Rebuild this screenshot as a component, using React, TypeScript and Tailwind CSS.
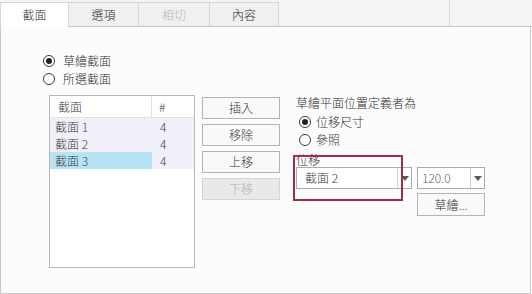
import type { ReactNode } from 'react';

const TABS = [
  { label: '截面', w: 'w-[69px]', active: true },
  { label: '選項', w: 'w-[70px]' },
  { label: '相切', w: 'w-[71px]', disabled: true },
  { label: '內容', w: 'w-[69px]' }
];

const ROWS = [
  { name: '截面 1', n: 4 },
  { name: '截面 2', n: 4 },
  { name: '截面 3', n: 4, selected: true }
];

function Radio({ checked, children, gap = 'gap-[8px]', indent = '' }: { checked?: boolean; children: ReactNode; gap?: string; indent?: string }) {
  return (
    <div className={`flex items-center h-[18px] ${gap} ${indent}`}>
      <span className="w-[12px] h-[12px] rounded-full border border-[#3a3a3a] bg-white flex items-center justify-center">
        {checked && <span className="w-[6px] h-[6px] rounded-full bg-[#222]"></span>}
      </span>
      <span className="leading-[16px]">{children}</span>
    </div>
  );
}

function Arrow() {
  return (
    <svg width="8" height="5" viewBox="0 0 8 5">
      <path d="M0 0 L8 0 L4 5 Z" fill="#5a5a5a" />
    </svg>
  );
}

function Btn({ children, disabled }: { children: ReactNode; disabled?: boolean }) {
  return (
    <div
      className={`h-[22px] w-[78px] border flex items-center justify-center leading-[16px] ${
        disabled ? 'border-[#d5d5d5] bg-[#e9e9e9] text-[#b0b0b0]' : 'border-[#b4b4b4] bg-[#f9f9f9] text-[#333]'
      }`}
    >
      {children}
    </div>
  );
}

export default function App() {
  return (
    <div
      className="w-[532px] h-[294px] bg-white overflow-hidden text-[12px] font-light text-[#2e2e2e] flex flex-col"
      style={{ fontFamily: '"Noto Sans CJK TC", "Noto Sans", sans-serif' }}
    >
      {/* Tabs */}
      <div className="h-[27px] flex bg-[#f4f4f4]">
        {TABS.map(t => (
          <div
            key={t.label}
            className={`${t.w} mt-[2px] flex items-center justify-center border-r border-t border-[#d6d6d6] leading-[16px] ${
              t.active ? 'bg-white border-l' : 'bg-[#f0f0f0] border-b border-b-[#c4c4c4]'
            } ${t.disabled ? 'text-[#b5b5b5]' : ''}`}
          >
            {t.label}
          </div>
        ))}
        <div className="w-[171px] border-b border-[#c4c4c4] border-r border-r-[#dadada]"></div>
        <div className="flex-1 border-b border-[#c4c4c4]"></div>
      </div>

      {/* Panel */}
      <div className="flex-1 w-[531px] bg-[#fcfcfd] border-l border-r border-b border-[#c8c8c8] pl-[42px] pt-[25px]">
        <Radio checked>草繪截面</Radio>
        <Radio>所選截面</Radio>

        <div className="flex mt-[7px]">
          {/* Section list */}
          <div className="ml-[6px] w-[146px] h-[173px] border border-[#b9b9b9] bg-white flex flex-col text-[#3c3c3c]">
            <div className="h-[22px] flex border-b border-[#e2e2e6]">
              <div className="w-[102px] pl-[8px] flex items-center leading-[16px] border-r border-[#e0e0e0]">截面</div>
              <div className="flex-1 pl-[7px] flex items-center leading-[16px]">#</div>
            </div>
            {ROWS.map(r => (
              <div key={r.name} className="h-[17px] flex bg-[#f1f0f9]">
                <div className={`w-[102px] pl-[5px] flex items-center leading-[16px] ${r.selected ? 'bg-[#b6e3f6]' : ''}`}>
                  {r.name}
                </div>
                <div className="flex-1 pl-[8px] flex items-center leading-[16px]">{r.n}</div>
              </div>
            ))}
          </div>

          {/* Buttons */}
          <div className="ml-[7px] mt-[2px] flex flex-col gap-[5px]">
            <Btn>插入</Btn>
            <Btn>移除</Btn>
            <Btn>上移</Btn>
            <Btn disabled>下移</Btn>
          </div>

          {/* Placement */}
          <div className="ml-[16px] relative flex flex-col">
            <div className="h-[16px] leading-[16px]">草繪平面位置定義者為</div>
            <div className="mt-[2px]">
              <Radio checked gap="gap-[5px]" indent="ml-[3px]">位移尺寸</Radio>
              <Radio gap="gap-[5px]" indent="ml-[3px]">參照</Radio>
            </div>
            <div className="mt-[4px] h-[14px] leading-[14px]">位移</div>
            <div className="flex gap-[5px]">
              <div className="w-[116px] h-[22px] border border-[#ababab] bg-white flex">
                <div className="flex-1 pl-[8px] flex items-center leading-[16px] text-[#3a3a3a]">截面 2</div>
                <div className="w-[14px] border-l border-[#d0d0d0] flex items-center justify-center">
                  <Arrow />
                </div>
              </div>
              <div className="w-[68px] h-[22px] border border-[#ababab] bg-white flex">
                <div className="flex-1 pl-[4px] flex items-center leading-[16px] text-[#666]">120.0</div>
                <div className="w-[14px] border-l border-[#d0d0d0] flex items-center justify-center">
                  <Arrow />
                </div>
              </div>
            </div>
            <div className="ml-[121px] mt-[4px] w-[68px] h-[23px] border border-[#b4b4b4] bg-[#f9f9f9] flex items-center justify-center leading-[16px]">
              草繪...
            </div>

            {/* highlight box */}
            <div className="absolute left-[-3px] top-[60px] w-[110px] h-[46px] border-2 border-[#9e2f45] pointer-events-none"></div>
          </div>
        </div>
      </div>
    </div>
  );
}
